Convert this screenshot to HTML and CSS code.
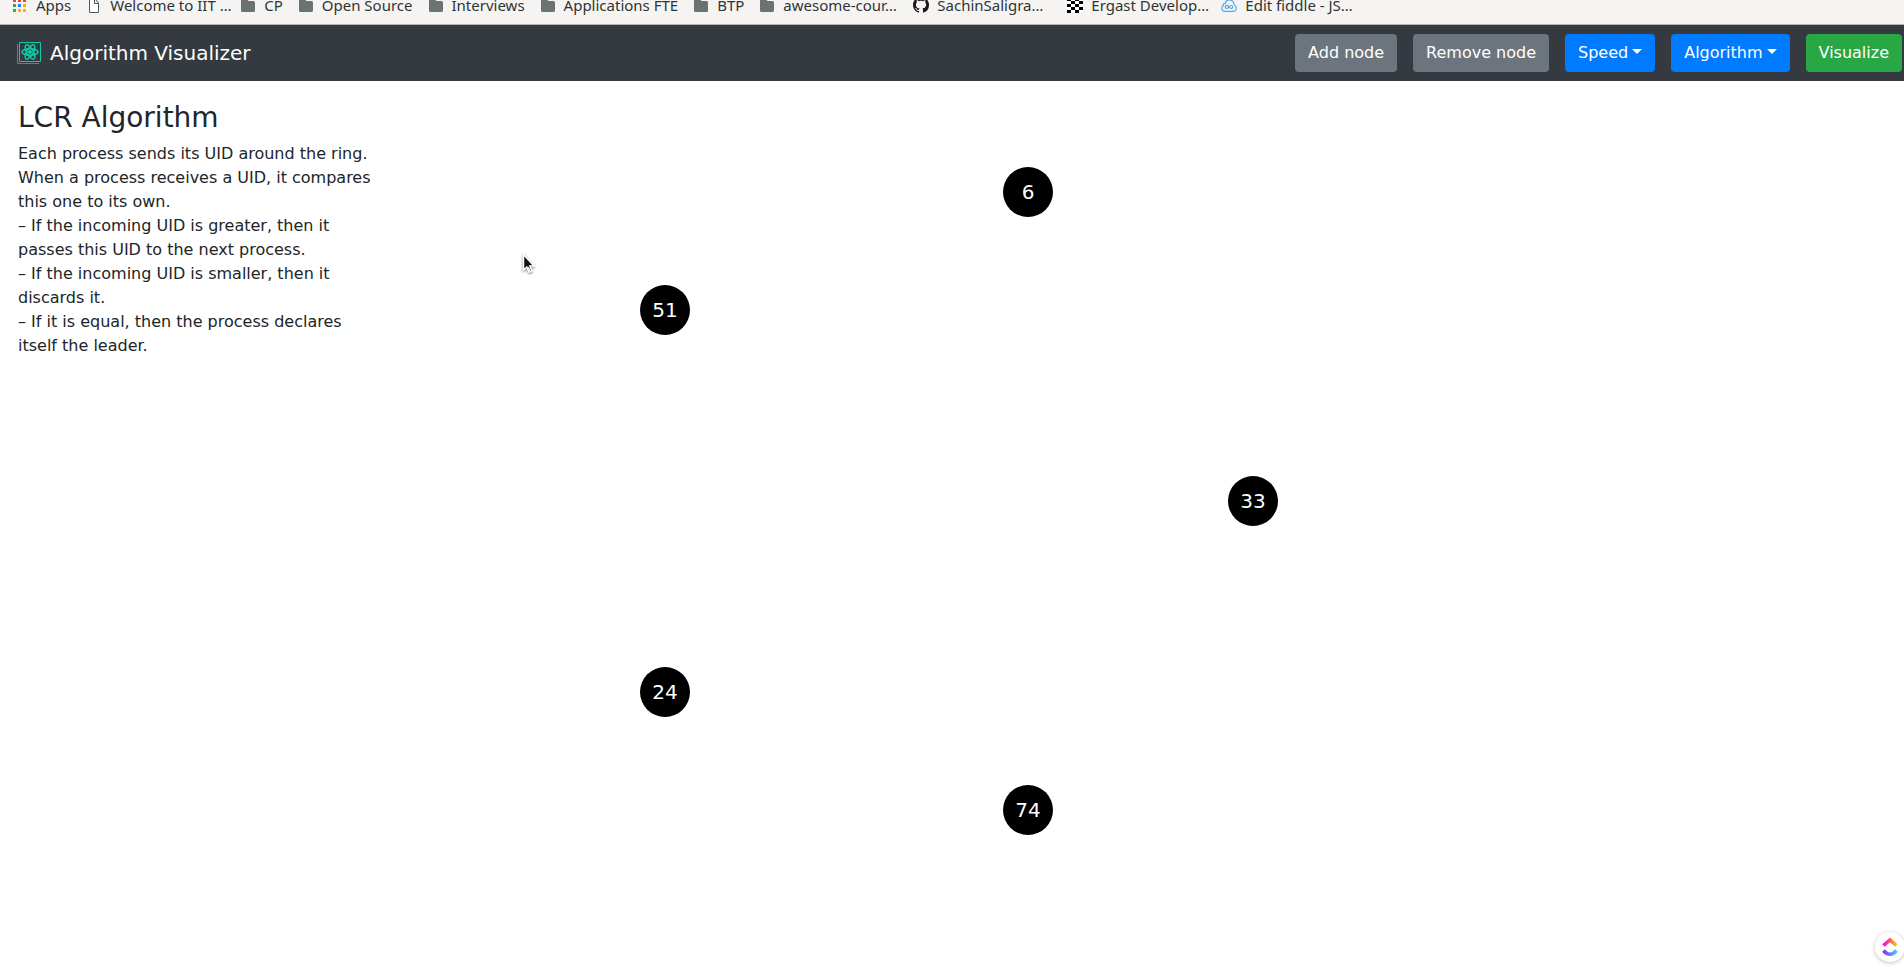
FILE: index.html
```html
<!DOCTYPE html>
<html lang="en">
<head>
<meta charset="utf-8">
<title>Algorithm Visualizer</title>
<link rel="stylesheet" href="styles.css">
</head>
<body>
<svg class="defs" aria-hidden="true">
  <symbol id="folder" viewBox="0 0 16 16"><path fill="#6b7370" d="M2.5 2H6.5L8.5 4H13.5Q15 4 15 5.500V13.500Q15 15 13.500 15H2.500Q1 15 1 13.500V3.500Q1 2 2.500 2Z"/></symbol>
</svg>
<nav class="bookmarks" aria-label="Bookmarks">
  <a class="bookmark" href="#"><svg class="favicon" viewBox="0 0 16 16"><g fill="#ea4335"><path d="M1 2h3v3H1zM6 2h3v3H6zM11 2h3v3h-3z"/></g><path fill="#34a853" d="M1 7h3v3H1zM1 12h3v3H1z"/><path fill="#1a82f7" d="M6 7h3v3H6z"/><path fill="#fbaf08" d="M11 7h3v3h-3zM6 12h3v3H6zM11 12h3v3h-3z"/></svg><span>Apps</span></a>
  <a class="bookmark" href="#"><svg class="favicon" viewBox="0 0 16 16"><path fill="#fff" stroke="#50565a" d="M3.500 2.500H9.500L12.500 6V15.500H3.500ZM8.500 2.500V6.500H12.500"/></svg><span class="clipped">Welcome to IIT …</span></a>
  <a class="bookmark" href="#"><svg class="favicon"><use href="#folder"/></svg><span>CP</span></a>
  <a class="bookmark" href="#"><svg class="favicon"><use href="#folder"/></svg><span>Open Source</span></a>
  <a class="bookmark" href="#"><svg class="favicon"><use href="#folder"/></svg><span>Interviews</span></a>
  <a class="bookmark" href="#"><svg class="favicon"><use href="#folder"/></svg><span>Applications FTE</span></a>
  <a class="bookmark" href="#"><svg class="favicon"><use href="#folder"/></svg><span>BTP</span></a>
  <a class="bookmark" href="#"><svg class="favicon"><use href="#folder"/></svg><span class="clipped">awesome-cour…</span></a>
  <a class="bookmark" href="#"><svg class="favicon" viewBox="0 0 16 16"><path fill="#191717" d="M8 0C3.580 0 0 3.580 0 8c0 3.540 2.290 6.530 5.470 7.590.4.070.55-.17.55-.38 0-.19-.01-.82-.01-1.490-2.010.37-2.530-.49-2.690-.94-.09-.23-.48-.94-.82-1.130-.28-.15-.68-.52-.01-.53.63-.01 1.080.58 1.230.82.72 1.210 1.870.87 2.330.66.07-.52.28-.87.51-1.070-1.780-.2-3.640-.89-3.640-3.950 0-.87.31-1.590.82-2.150-.08-.2-.36-1.020.08-2.120 0 0 .67-.21 2.200.82.64-.18 1.320-.27 2-.27s1.360.09 2 .27c1.530-1.040 2.200-.82 2.200-.82.44 1.100.16 1.920.08 2.120.51.56.82 1.270.82 2.150 0 3.070-1.870 3.750-3.650 3.950.29.25.54.73.54 1.480 0 1.070-.01 1.930-.01 2.200 0 .21.15.46.55.38A8.010 8.010 0 0 0 16 8c0-4.420-3.580-8-8-8z"/></svg><span class="clipped">SachinSaligra…</span></a>
  <a class="bookmark" href="#"><svg class="favicon" viewBox="0 0 16 16" shape-rendering="crispEdges"><path fill="#fff" d="M0 0h16v16H0z"/><path d="M0 1h4v3H0zM8 1h4v3H8zM4 4h4v3H4zM12 4h4v3h-4zM0 7h4v3H0zM8 7h4v3H8zM4 10h4v3H4zM12 10h4v3h-4zM0 13h4v3H0zM8 13h4v3H8z"/></svg><span class="clipped">Ergast Develop…</span></a>
  <a class="bookmark" href="#"><svg class="favicon" viewBox="0 0 16 16"><g fill="none" stroke="#4fa6ec" stroke-width="1.200"><path d="M4 14.400C1.500 14.400.7 12.500.7 11.300Q.7 9.500 2.200 8.700Q2 6.400 4.200 6.300C5 3.500 7 2.600 9 2.900Q12.700 3.500 13 7.500Q15.400 8.500 15.300 11Q15 14.400 12 14.400Z"/><path d="M8 10C6.500 7.700 4.300 8 4.300 9.900S6.800 12 8 10S11.700 8 11.700 9.900S9.300 12 8 10Z"/></g></svg><span class="clipped">Edit fiddle - JS…</span></a>
</nav>

<header class="navbar">
  <a class="brand" href="#">
    <svg class="logo" viewBox="0 0 24 22" fill="none" stroke="#0dcea6" aria-hidden="true">
      <path d="M2.500 .5V19.500H23.500V.5Z"/>
      <path d="M.5 2V21.500H22" stroke-opacity=".75"/>
      <g stroke-width="1.500"><ellipse cx="13" cy="10" rx="8" ry="3.200"/><ellipse cx="13" cy="10" rx="8" ry="3.200" transform="rotate(60 13 10)"/><ellipse cx="13" cy="10" rx="8" ry="3.200" transform="rotate(120 13 10)"/></g>
      <circle cx="13" cy="10" r="1.500" fill="#0dcea6"/>
    </svg>
    <span>Algorithm Visualizer</span>
  </a>
  <div class="actions">
    <button class="btn secondary" type="button">Add node</button>
    <button class="btn secondary" type="button">Remove node</button>
    <button class="btn primary caret" type="button" aria-haspopup="menu">Speed</button>
    <button class="btn primary caret" type="button" aria-haspopup="menu">Algorithm</button>
    <button class="btn success" type="button">Visualize</button>
  </div>
</header>

<main class="workspace">
  <section class="description">
    <h1>LCR Algorithm</h1>
    <p>Each process sends its UID around the ring. When a process receives a UID, it compares this one to its own.</p>
    <p>– If the incoming UID is greater, then it passes this UID to the next process.</p>
    <p>– If the incoming UID is smaller, then it discards it.</p>
    <p>– If it is equal, then the process declares itself the leader.</p>
  </section>
  <section class="canvas" aria-label="Process ring">
    <div class="node n1">33</div>
    <div class="node n2">74</div>
    <div class="node n3">24</div>
    <div class="node n4">51</div>
    <div class="node n5">6</div>
  </section>
</main>

<svg class="pointer" viewBox="0 0 14 22" aria-hidden="true"><path d="M1.500 1.500V17L4.800 14L7.200 19.300L10 18L7.800 13H12Z" fill="#111" stroke="#fff" stroke-width="1.500"/><path d="M6.300 14.200L8 18" stroke="#fff" stroke-width="1.500"/></svg>
<button class="widget" type="button" aria-label="Open widget">
  <svg viewBox="0 0 16 20" fill="none" stroke-width="3.600">
    <defs>
      <linearGradient id="warm"><stop offset="0" stop-color="#ff02f0"/><stop offset=".5" stop-color="#fd5b5b"/><stop offset="1" stop-color="#ffc800"/></linearGradient>
      <linearGradient id="cool"><stop offset="0" stop-color="#8930fd"/><stop offset="1" stop-color="#49ccf9"/></linearGradient>
    </defs>
    <path stroke="url(#warm)" d="M1.500 8.500L8 2.800L14.500 8.500"/>
    <path stroke="url(#cool)" d="M1.500 13.500Q4.500 17.200 8 17.200T14.500 13.500"/>
  </svg>
</button>
</body>
</html>
```
FILE: styles.css
```css
* { box-sizing: border-box; }

body {
  margin: 0;
  min-height: 100vh;
  display: flex;
  flex-direction: column;
  overflow: hidden;
  background: #fff;
  color: #212529;
  font: 16px/24px "DejaVu Sans", sans-serif;
}

.defs { display: none; }

.bookmarks {
  display: flex;
  align-items: center;
  gap: 15px;
  height: 25px;
  padding: 0 12px 14px;
  background: #f6f4f2;
  border-bottom: 1px solid #b9b5ae;
}

.bookmark {
  display: flex;
  align-items: center;
  flex: none;
  gap: 8px;
  color: #2e3436;
  font: 15px/20px "Noto Sans", sans-serif;
  text-decoration: none;
  white-space: nowrap;
}

.favicon { flex: none; width: 16px; height: 16px; }
.clipped { width: 115px; }

.navbar {
  display: flex;
  align-items: center;
  justify-content: space-between;
  height: 56px;
  padding: 0 2px 0 17px;
  background: #343a40;
}

.brand {
  display: flex;
  align-items: center;
  gap: 9px;
  color: #fff;
  font-size: 20px;
  line-height: 30px;
  text-decoration: none;
}

.logo { width: 24px; height: 22px; }

.actions { display: flex; gap: 16px; }

.btn {
  padding: 6px 12px;
  border: 1px solid transparent;
  border-radius: 4px;
  color: #fff;
  font: inherit;
}

.secondary { background: #6c757d; }
.primary { background: #007bff; }
.success { background: #28a745; }

.caret::after {
  content: "";
  display: inline-block;
  margin-left: 4px;
  vertical-align: 4px;
  border: 5px solid transparent;
  border-top-color: #fff;
  border-bottom: 0;
}

.workspace {
  flex: 1;
  display: grid;
  grid-template-columns: 400px 1fr;
}

.description { padding: 19px 18px; }

h1 {
  margin: 0 0 6px;
  font-size: 28px;
  font-weight: 400;
  line-height: 36px;
}

p { margin: 0; }

.canvas { position: relative; }

.node {
  position: absolute;
  display: grid;
  place-items: center;
  width: 50px;
  height: 50px;
  border-radius: 50%;
  background: #000;
  color: #fff;
  font-size: 20px;
}

.n1 { left: 828px; top: 395px; }
.n2 { left: 603px; top: 704px; }
.n3 { left: 240px; top: 586px; }
.n4 { left: 240px; top: 204px; }
.n5 { left: 603px; top: 86px; }

.pointer {
  position: absolute;
  left: 522px;
  top: 253px;
  width: 14px;
  height: 22px;
  filter: drop-shadow(0 1px 1px rgba(0, 0, 0, .5));
}

.widget {
  position: fixed;
  right: -1px;
  bottom: 8px;
  display: grid;
  place-items: center;
  width: 30px;
  height: 30px;
  padding: 0;
  border: 0;
  border-radius: 50%;
  background: #fff;
  box-shadow: 0 1px 4px rgba(0, 0, 0, .25);
}

.widget svg { width: 16px; height: 20px; }
```
